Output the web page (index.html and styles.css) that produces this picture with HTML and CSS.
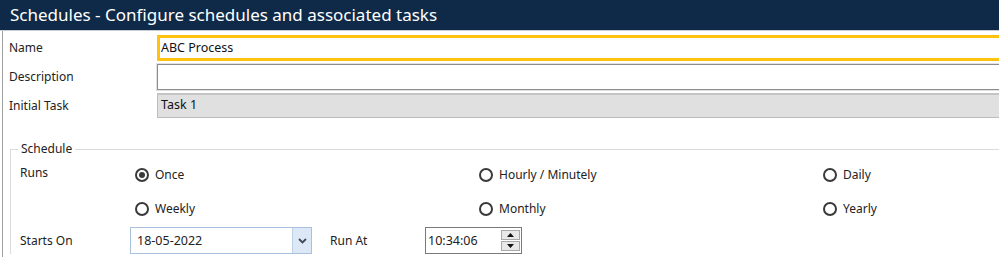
FILE: index.html
```html
<!DOCTYPE html>
<html>
<head>
<meta charset="utf-8">
<link rel="stylesheet" href="styles.css">
</head>
<body>
<div class="window">
  <div class="titlebar">Schedules - Configure schedules and associated tasks</div>
  <div class="content">
    <div class="fields">
      <label class="lbl">Name</label>
      <div class="input focus">ABC Process</div>
      <label class="lbl">Description</label>
      <div class="input desc"></div>
      <label class="lbl">Initial Task</label>
      <div class="input disabled">Task 1</div>
    </div>
    <fieldset class="schedule">
      <legend>Schedule</legend>
      <div class="runs">
        <span class="lbl runs-lbl">Runs</span>
        <span class="radio"><span class="dot checked"></span>Once</span>
        <span class="radio"><span class="dot"></span>Hourly / Minutely</span>
        <span class="radio"><span class="dot"></span>Daily</span>
        <span class="lbl"></span>
        <span class="radio"><span class="dot"></span>Weekly</span>
        <span class="radio"><span class="dot"></span>Monthly</span>
        <span class="radio"><span class="dot"></span>Yearly</span>
      </div>
      <div class="starts">
        <span class="lbl start-lbl">Starts On</span>
        <div class="datebox">
          <span class="val">18-05-2022</span>
          <span class="dropbtn"><svg width="9" height="6" viewBox="0 0 9 6"><path d="M1 1 L4.5 4.5 L8 1" fill="none" stroke="#3d4a5c" stroke-width="1.8"/></svg></span>
        </div>
        <span class="lbl runat-lbl">Run At</span>
        <div class="timebox">
          <span class="val">10:34:06</span>
          <span class="spin">
            <span class="spinbtn"><svg width="7" height="4" viewBox="0 0 7 4"><path d="M0 4 L3.5 0 L7 4 Z" fill="#111"/></svg></span>
            <span class="spinbtn"><svg width="7" height="4" viewBox="0 0 7 4"><path d="M0 0 L3.5 4 L7 0 Z" fill="#111"/></svg></span>
          </span>
        </div>
      </div>
    </fieldset>
  </div>
</div>
</body>
</html>
```

FILE: styles.css
```css
html, body {
  margin: 0;
  padding: 0;
  overflow: hidden;
  background: #ffffff;
}
body {
  font-family: "Noto Sans", "Open Sans", sans-serif;
  font-size: 12px;
  color: #222222;
}
.window {
  width: 1030px;
  height: 257px;
}
.titlebar {
  background: #0f2a48;
  color: #ffffff;
  font-family: "Noto Sans", "Open Sans", sans-serif;
  font-size: 17px;
  line-height: 29px;
  padding-left: 10px;
  border-bottom: 1px solid #c8ccd2;
  box-sizing: border-box;
  height: 31px;
}
.content {
  margin-left: 2px;
  border-left: 1px solid #a0a0a0;
  height: 226px;
}
.fields {
  display: grid;
  grid-template-columns: 148px 1fr;
  grid-template-rows: 26px 26px 25px;
  row-gap: 3px;
  padding: 4px 0 0 6px;
  align-items: center;
}
.lbl {
  line-height: 16px;
}
.input {
  height: 26px;
  box-sizing: border-box;
  line-height: 20px;
  padding-left: 3px;
  font-size: 12.5px;
  color: #111;
}
.input.focus {
  border: 3px solid #ffc20e;
  padding-left: 1px;
}
.input.desc {
  border: 1px solid #8c8c8c;
  box-shadow: 0 0 0 1px #e2e2e2;
}
.input.disabled {
  height: 25px;
  background: #e0e0e0;
  border: 1px solid #bcbcbc;
  border-top: 2px solid #c4c4c4;
  line-height: 20px;
}
.schedule {
  margin: 23px 0 0 7px;
  padding: 8px 0 0 7px;
  border: 1px solid #dcdcdc;
  border-right: none;
  border-bottom: none;
  min-width: 0;
}
.schedule legend {
  padding: 0 3px;
  line-height: 16px;
  font-size: 12px;
  color: #222;
}
.runs {
  display: grid;
  grid-template-columns: 115px 344px 344px auto;
  grid-auto-rows: 20px;
  row-gap: 14px;
  align-items: center;
  margin-left: 2px;
}
.runs-lbl {
  align-self: start;
}
.radio {
  display: flex;
  align-items: center;
  gap: 6px;
  line-height: 16px;
}
.dot {
  width: 14px;
  height: 14px;
  box-sizing: border-box;
  border: 2px solid #3a3a3a;
  border-radius: 50%;
  display: flex;
  align-items: center;
  justify-content: center;
}
.dot.checked::after {
  content: "";
  width: 6px;
  height: 6px;
  border-radius: 50%;
  background: #3a3a3a;
}
.starts {
  display: flex;
  align-items: center;
  margin: 8px 0 0 2px;
  height: 27px;
}
.start-lbl {
  width: 110px;
}
.datebox {
  width: 182px;
  height: 27px;
  box-sizing: border-box;
  border: 1px solid #a9c1dc;
  display: flex;
  align-items: center;
}
.datebox .val {
  flex: 1;
  padding-left: 6px;
  font-size: 12.5px;
}
.dropbtn {
  width: 18px;
  height: 25px;
  background: #dde8f6;
  border-left: 1px solid #bcd0e8;
  display: flex;
  align-items: center;
  justify-content: center;
}
.runat-lbl {
  width: 95px;
  margin-left: 18px;
}
.timebox {
  width: 97px;
  height: 27px;
  box-sizing: border-box;
  border: 1px solid #7a7a7a;
  display: flex;
  align-items: center;
}
.timebox .val {
  flex: 1;
  padding-left: 2px;
  font-size: 12.5px;
}
.spin {
  display: flex;
  flex-direction: column;
  width: 19px;
  margin-right: 1px;
  gap: 1px;
}
.spinbtn {
  height: 10px;
  background: #e8e8e8;
  border: 1px solid #a8a8a8;
  box-sizing: border-box;
  display: flex;
  align-items: center;
  justify-content: center;
}
```
